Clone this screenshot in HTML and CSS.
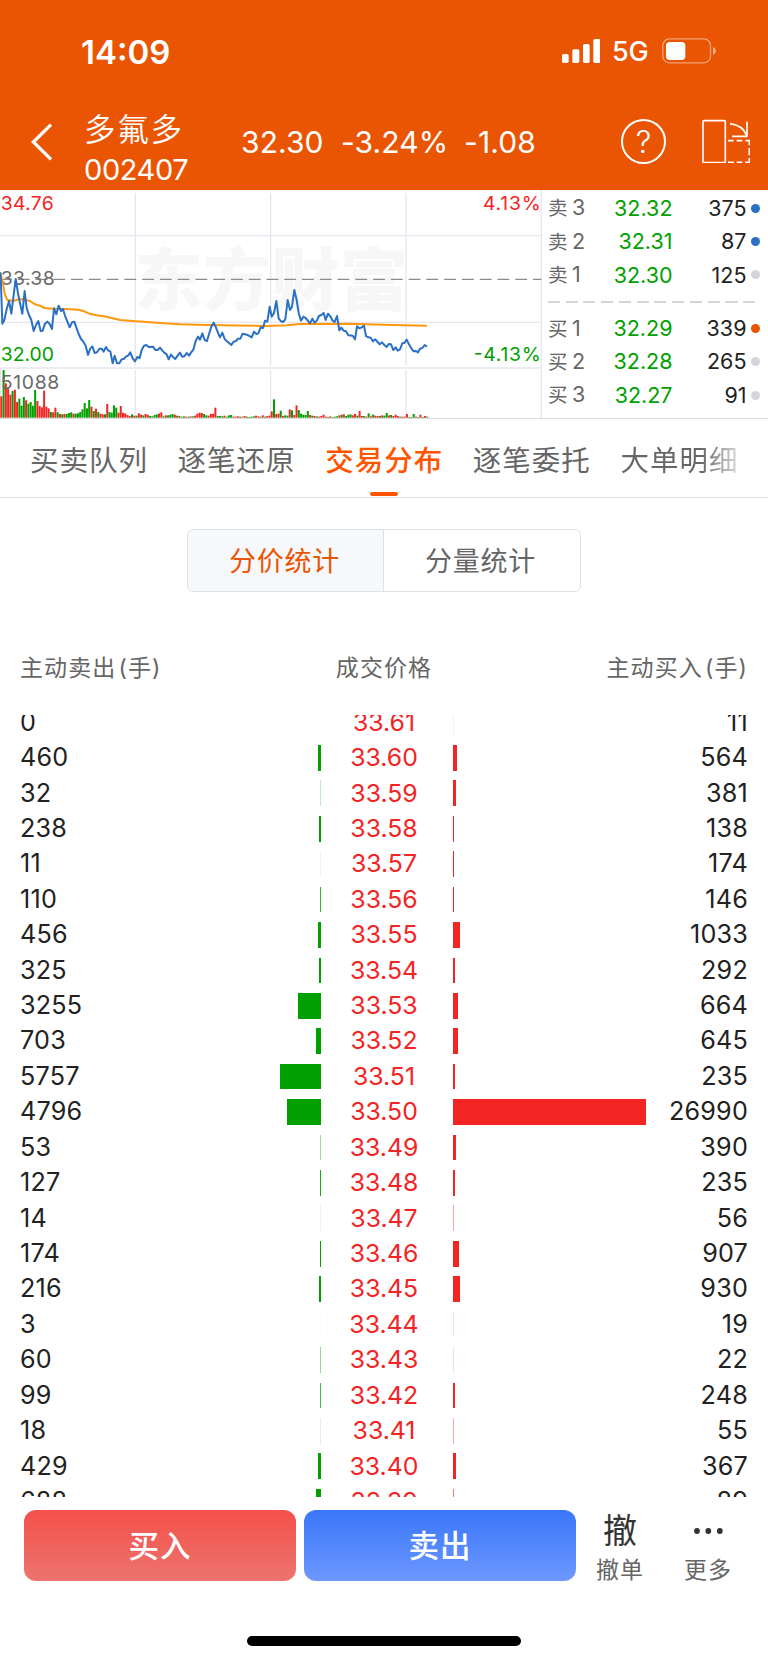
FILE: index.html
```html
<!DOCTYPE html>
<html lang="zh-CN">
<head>
<meta charset="utf-8">
<title>多氟多 002407</title>
<link rel="stylesheet" href="styles.css">
</head>
<body>
<header class="top">
  <div class="status">
    <span class="clock">14:09</span>
    <div class="status-right">
      <svg class="signal" viewBox="0 0 115 72"><g fill="#fff"><rect x="0" y="45" width="20" height="27" rx="5"/><rect x="31" y="31" width="21" height="41" rx="5"/><rect x="63" y="15" width="20" height="57" rx="5"/><rect x="94" y="0" width="21" height="72" rx="5"/></g></svg>
      <span class="network">5G</span>
      <svg class="battery" viewBox="0 0 162 78"><rect x="2.5" y="2.5" width="143" height="72" rx="20" fill="none" stroke="#fff" stroke-opacity=".45" stroke-width="4"/><rect x="12" y="12" width="58" height="54" rx="11" fill="#fff"/><path d="M153 27q9 4 9 12t-9 12z" fill="#fff" fill-opacity=".5"/></svg>
    </div>
  </div>
  <div class="nav">
    <svg class="back" viewBox="0 0 66 114"><path d="M60 5 7 57l53 52" fill="none" stroke="#fff" stroke-width="10"/></svg>
    <div class="stock"><span class="stock-name">多氟多</span><span class="stock-code">002407</span></div>
    <div class="quote"><span class="q1">32.30</span><span class="q2">-3.24%</span><span class="q3">-1.08</span></div>
    <div class="help">?</div>
    <svg class="rotate" viewBox="0 0 144 134"><g fill="none" stroke="#fff" stroke-width="5"><rect x="3" y="5" width="67" height="126" rx="3"/><path d="M84 14C108 17 126 29 134 49M135 8v45M90 52h46"/><path d="M78 65h17m9 0h17m9 0h12v14M142 87v22M142 117v13h-12M121 130h-17m-8 0h-18"/></g></svg>
  </div>
</header>

<section class="market">
  <div class="chart">
    <svg viewBox="0 15 1626 687" preserveAspectRatio="none">
      <text class="watermark" x="404" y="359" textLength="820">东方财富</text>
      <g stroke="#e6e7ef" stroke-width="4"><path d="M406 24V542M406 555V698M812 24V542M812 555V698M1218 24V542M1218 555V698M0 152H1624M0 412H1624M0 549H1624M1624 15V698"/></g>
      <path d="M1 549V698" stroke="#dcdde4" stroke-width="3"/>
      <path d="M0 283H1624" stroke="#8c8c8c" stroke-width="4" stroke-dasharray="35.5 17.8"/>
      <g id="volume"></g>
      <g class="axis">
        <text x="2" y="75" fill="#f32424" textLength="159">34.76</text>
        <text x="2" y="301" fill="#6a6a6a" textLength="162">33.38</text>
        <text x="2" y="528" fill="#00a000" textLength="160">32.00</text>
        <text x="2" y="612" fill="#6a6a6a" textLength="176">51088</text>
        <text x="1449" y="76" fill="#f32424" textLength="173">4.13%</text>
        <text x="1421" y="528" fill="#00a000" textLength="201">-4.13%</text>
      </g>
      <path fill="none" stroke="#ff980f" stroke-width="6" stroke-linejoin="round" d="M2 266 8 290 14 325 21 344 40 348 60 342 90 348 105 358 120 362 133 369 160 371 200 372 236 374 250 378 268 386 290 391 320 395 360 405 410 409 480 414 540 418 620 420 800 423 860 421 900 417 1050 416 1100 418 1180 420 1281 422"/>
      <path fill="none" stroke="#2a70c4" stroke-width="6" stroke-linejoin="round" d="M1 262 3 300 7 416 13 405 20 373 27 348 34 386 47 282 54 325 60 355 67 386 74 318 80 370 87 390 94 405 101 438 108 420 115 408 122 438 128 437 135 416 142 410 149 417 156 432 162 370 169 388 176 362 183 378 189 372 196 395 203 412 209 427 216 412 223 410 230 430 236 447 243 462 250 470 257 482 264 510 271 490 277 484 284 504 291 502 298 491 305 491 311 500 318 486 325 497 331 499 338 535 344 512 351 535 358 535 365 523 371 522 378 515 385 511 391 502 398 520 405 529 412 516 419 519 425 495 432 482 439 480 446 486 459 485 466 495 473 495 480 488 487 497 493 503 500 508 506 523 513 509 520 517 526 522 533 512 540 503 546 515 553 514 560 504 567 512 573 503 580 494 587 468 594 455 600 464 607 445 614 465 621 468 628 444 634 425 641 413 648 428 655 446 660 457 667 443 674 462 680 468 687 474 694 480 701 470 708 468 714 461 721 461 728 446 741 449 755 457 762 440 769 447 775 445 782 427 789 429 795 407 802 410 809 365 815 395 822 384 829 348 836 400 842 408 849 411 856 403 863 345 870 375 876 365 883 315 890 345 896 384 903 407 910 395 917 399 930 415 937 401 944 413 951 406 957 393 964 390 971 384 977 405 984 386 991 394 998 407 1004 411 1011 393 1018 436 1024 428 1031 437 1038 439 1045 451 1058 452 1065 463 1071 424 1078 430 1085 427 1092 422 1098 453 1105 457 1112 458 1119 469 1126 463 1133 471 1139 478 1146 472 1153 480 1160 486 1166 477 1173 478 1180 495 1187 487 1193 497 1200 493 1207 475 1214 473 1220 464 1227 478 1234 490 1241 499 1248 498 1254 502 1260 491 1267 489 1274 480 1281 485"/>
    </svg>
  </div>
  <div class="book">
    <div class="level"><span class="side">卖<b>3</b></span><span class="price">32.32</span><span class="qty">375</span><i class="dot blue"></i></div>
    <div class="level"><span class="side">卖<b>2</b></span><span class="price">32.31</span><span class="qty">87</span><i class="dot blue"></i></div>
    <div class="level"><span class="side">卖<b>1</b></span><span class="price">32.30</span><span class="qty">125</span><i class="dot"></i></div>
    <div class="split"></div>
    <div class="level"><span class="side">买<b>1</b></span><span class="price">32.29</span><span class="qty">339</span><i class="dot orange"></i></div>
    <div class="level"><span class="side">买<b>2</b></span><span class="price">32.28</span><span class="qty">265</span><i class="dot"></i></div>
    <div class="level"><span class="side">买<b>3</b></span><span class="price">32.27</span><span class="qty">91</span><i class="dot"></i></div>
  </div>
</section>

<nav class="tabs">
  <span class="tab">买卖队列</span><span class="tab">逐笔还原</span><span class="tab active">交易分布</span><span class="tab">逐笔委托</span><span class="tab fading">大单明细</span>
</nav>

<div class="segment"><span class="seg on">分价统计</span><span class="seg">分量统计</span></div>

<div class="list-head"><span>主动卖出 (手)</span><span>成交价格</span><span>主动买入 (手)</span></div>
<div class="list"><div class="rows" id="rows"></div></div>

<footer class="actions">
  <div class="btn buy">买入</div>
  <div class="btn sell">卖出</div>
  <div class="tool cancel"><span class="tool-icon">撤</span><span class="tool-label">撤单</span></div>
  <div class="tool"><span class="tool-icon"><svg class="dots" viewBox="0 0 29 6"><circle cx="3" cy="3" r="2.9"/><circle cx="14.3" cy="3" r="2.9"/><circle cx="25.8" cy="3" r="2.9"/></svg></span><span class="tool-label">更多</span></div>
</footer>
<div class="home"></div>
<script src="app.js"></script>
</body>
</html>
```
FILE: styles.css
```css
* { box-sizing: border-box; }
body {
  margin: 0;
  width: 768px;
  height: 1663px;
  overflow: hidden;
  background: #fff;
  color: #222;
  font-family: Inter, "Noto Sans CJK SC", sans-serif;
}
.top { height: 190.4px; background: #ea5504; color: #fff; }
.status {
  height: 102px;
  padding: 0 52px 0 81px;
  display: flex;
  justify-content: space-between;
  align-items: center;
}
.clock { font-size: 33px; font-weight: 600; line-height: 40px; padding-top: 1px; }
.status-right { display: flex; align-items: center; }
.signal { width: 38.3px; height: 24px; margin-right: 13px; }
.network { font-size: 27px; font-weight: 500; line-height: 30px; width: 36px; margin: 2px 14px 0 -1px; letter-spacing: -.3px; }
.battery { width: 54px; height: 26px; }
.nav { height: 88px; display: flex; padding-left: 31px; }
.back { width: 22px; height: 38px; margin-top: 21px; flex: none; }
.stock { width: 156px; margin-left: 31px; padding-top: 8px; flex: none; }
.stock-name, .stock-code { display: block; height: 40px; line-height: 40px; white-space: nowrap; }
.stock-name { font-size: 31.5px; letter-spacing: 1.8px; font-weight: 350; }
.stock-code { font-size: 29px; letter-spacing: -.4px; }
.quote { width: 380px; display: flex; font-size: 30px; line-height: 40px; padding: 20px 0 0 1px; letter-spacing: .1px; flex: none; }
.q1 { width: 100px; }
.q2 { width: 123px; }
.help {
  width: 45px;
  height: 45px;
  margin: 17px 36px 0 1px;
  border: 2px solid #fff;
  border-radius: 50%;
  font-size: 31px;
  font-weight: 300;
  line-height: 41px;
  text-align: center;
  flex: none;
}
.rotate { width: 48px; height: 44.7px; margin-top: 16.5px; flex: none; }

.market { height: 228.6px; display: flex; border-bottom: 1px solid #d9dae2; }
.chart { width: 542px; height: 229px; flex: none; }
.chart svg { display: block; width: 542px; height: 229px; }
.watermark { font: 900 204px "Noto Sans CJK SC", sans-serif; fill: #f7f7f7; }
.axis { font-size: 58px; }
.book { flex: 1; padding: 1px 0 0 6px; }
.level {
  height: 33.4px;
  line-height: 33.4px;
  display: grid;
  grid-template-columns: 52px 72.5px 74px 13px;
  align-items: center;
  font-size: 21.5px;
}
.side { color: #666; font-size: 19.5px; white-space: nowrap; }
.side b { font-weight: 400; font-size: 21.5px; margin-left: 4.5px; }
.price { color: #00a000; text-align: right; }
.qty { text-align: right; }
.dot { width: 9px; height: 9px; border-radius: 50%; background: #d3d5dd; justify-self: end; margin-top: -1px; }
.dot.blue { background: #2a70c4; }
.dot.orange { background: #ea5504; }
.split {
  height: 20px;
  width: 207px;
  background: repeating-linear-gradient(90deg, #d3d5dd 0 12px, transparent 12px 17.75px) 0 9px / 100% 2px no-repeat;
}

.tabs { height: 79px; padding-left: 30px; display: flex; gap: 29.6px; border-bottom: 1px solid #dcdde4; }
.tab {
  position: relative;
  width: 118px;
  flex: none;
  font-size: 28.5px;
  letter-spacing: 1px;
  line-height: 83px;
  color: #666;
  white-space: nowrap;
}
.tab.active { color: #ff5500; font-weight: 500; }
.tab.active::after {
  content: "";
  position: absolute;
  left: 45px;
  bottom: 1px;
  width: 28px;
  height: 4px;
  border-radius: 2px;
  background: #ff5500;
}
.tab.fading {
  background: linear-gradient(90deg, #666 0 68%, #d8d8d8);
  background-clip: text;
  -webkit-background-clip: text;
  color: transparent;
}

.segment {
  width: 394px;
  height: 63px;
  margin: 31px auto 0;
  display: flex;
  border: 1.5px solid #dfe1e8;
  border-radius: 6px;
  overflow: hidden;
}
.seg { flex: 1; text-align: center; line-height: 63px; font-size: 27px; letter-spacing: .8px; color: #666; padding-right: 3px; }
.seg.on { background: #f6f8fb; color: #ea5504; border-right: 1px solid #dfe1e8; padding-right: 2px; }

.list-head {
  height: 36px;
  margin-top: 58px;
  padding: 0 20px 0 20px;
  display: grid;
  grid-template-columns: 1fr auto 1fr;
  line-height: 36px;
  font-size: 23px;
  letter-spacing: 1.1px;
  word-spacing: -5.5px;
  color: #666;
}
.list-head span:last-child { text-align: right; }
.list { height: 782px; margin-top: 29px; overflow: hidden; }
.rows { margin-top: -10.3px; }
.row {
  height: 35.43px;
  padding: 0 20px;
  display: grid;
  grid-template-columns: 101px 200px 132px 193px 102px;
  align-items: center;
  font-size: 25.2px;
  letter-spacing: .2px;
  line-height: 35.43px;
}
.mid { color: #f32424; text-align: center; font-size: 24.8px; letter-spacing: 0; padding-right: 6px; }
.row span:last-child { text-align: right; }
.bar { height: 25.7px; }
.bar.out { background: #00a000; justify-self: end; }
.bar.in { background: #f32424; }

.actions { height: 71px; margin-top: 13px; padding-left: 24px; display: flex; }
.btn {
  width: 272px;
  height: 71px;
  margin-right: 8px;
  border-radius: 12px;
  color: #fff;
  font-size: 30.5px;
  font-weight: 500;
  letter-spacing: 1px;
  line-height: 71px;
  text-align: center;
  flex: none;
}
.buy { background: linear-gradient(#f4504a, #ec746e); }
.sell { background: linear-gradient(#3a76f8, #6d98ff); }
.tool { width: 88px; display: flex; flex-direction: column; align-items: center; color: #333; }
.cancel { margin-left: -8px; }
.tool-icon { flex: none; height: 42px; line-height: 42px; font-size: 34px; display: flex; align-items: center; }
.dots { width: 29px; height: 6px; fill: #333; }
.tool-label { flex: none; height: 36px; line-height: 37px; font-size: 23px; letter-spacing: 1px; color: #666; }
.home { width: 274px; height: 10px; margin: 55px auto 0; border-radius: 5px; background: #000; }
```
FILE: app.js
```js
// [active sell, price, active buy]
const trades = [
  [0, "33.61", 11], [460, "33.60", 564], [32, "33.59", 381], [238, "33.58", 138],
  [11, "33.57", 174], [110, "33.56", 146], [456, "33.55", 1033], [325, "33.54", 292],
  [3255, "33.53", 664], [703, "33.52", 645], [5757, "33.51", 235], [4796, "33.50", 26990],
  [53, "33.49", 390], [127, "33.48", 235], [14, "33.47", 56], [174, "33.46", 907],
  [216, "33.45", 930], [3, "33.44", 19], [60, "33.43", 22], [99, "33.42", 248],
  [18, "33.41", 55], [429, "33.40", 367], [688, "33.39", 89]
];
// Bars thinner than one pixel are drawn one pixel wide and faded.
const bar = (n, dir) => {
  const w = n * 0.00714;
  return `<div class="bar ${dir}" style="width:${n ? Math.max(w, 1) : 0}px;opacity:${Math.min(w, 1)}"></div>`;
};
document.getElementById("rows").innerHTML = trades.map(([s, p, b]) =>
  `<div class="row"><span>${s}</span>${bar(s, "out")}<span class="mid">${p}</span>${bar(b, "in")}<span>${b}</span></div>`
).join("");

// Volume per minute: r = up, g = down, followed by the bar height.
const volume = "r64 g143 r103 r87 r69 g80 r84 r47 g57 g36 g62 r52 g42 g47 g36 g83 r50 r35 r31 r81 r33 r28 g17 r16 r30 g16 r11 g10 r11 g11 g14 g16 r12 g12 g13 g17 g25 g44 g28 g53 r33 g20 r27 g17 r12 r10 g10 r41 g17 g15 g37 g30 r15 r35 r15 r13 r8 r5 g10 r6 g6 r13 r9 g7 r11 r9 g5 g4 g8 g10 r12 r16 g4 r7 g7 g9 g11 r9 g6 r5 g3 g4 r3 g3 r4 g4 r6 r12 r15 r14 g11 g7 r6 r11 r12 r30 g5 g5 g4 r6 g3 g7 g8 r3 r3 r4 g3 r3 r5 g3 g2 g3 g4 r6 r4 g3 r7 g3 r5 r6 r19 g55 r11 r12 g21 r5 g7 g6 r25 g22 r8 r37 g23 g12 g9 g8 g20 r8 g6 r5 g4 r3 r5 r9 r3 g2 r4 g2 g3 g4 r7 g9 r10 g5 g9 g10 r7 r11 g6 r20 r5 g5 r3 g13 r4 g9 r6 r5 g5 r7 g6 g14 r7 g8 r5 r9 r5 g3 r3 r3 r11 g2 g2 g11 r3 g2 r9 g2 r5 g3";
document.getElementById("volume").innerHTML = volume.split(" ").map((v, i) => {
  const h = +v.slice(1);
  return `<rect x="${(1 + i * 6.76).toFixed(1)}" y="${698 - h}" width="6" height="${h}" fill="${v[0] === "r" ? "#f32424" : "#00a000"}"/>`;
}).join("");
```
